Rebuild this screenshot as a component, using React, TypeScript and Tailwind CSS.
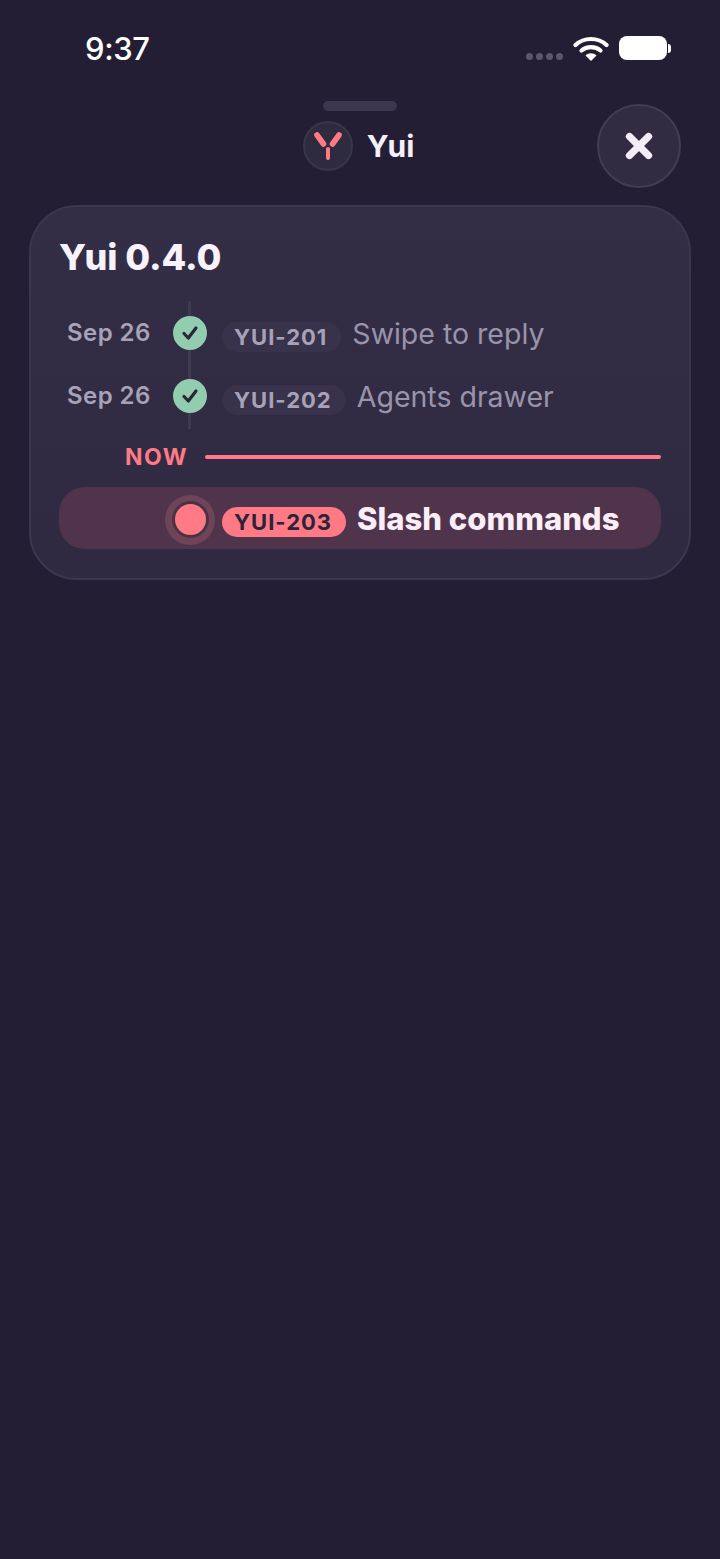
import { X } from 'lucide-react';

const FONT = "font-['Inter',sans-serif]";

const DONE = [
  { date: 'Sep 26', id: 'YUI-201', title: 'Swipe to reply' },
  { date: 'Sep 26', id: 'YUI-202', title: 'Agents drawer' },
];

function StatusBar() {
  return (
    <div className="flex h-[96px] items-center justify-between pl-[85px] pr-[49px]">
      <span className="text-[31px] font-medium leading-none tracking-[-0.4px] text-white">9:37</span>
      <div className="flex items-center">
        <div className="mt-[16px] flex gap-[3px]">
          <span className="h-[7px] w-[7px] rounded-full bg-[#5c5869]" />
          <span className="h-[7px] w-[7px] rounded-full bg-[#5c5869]" />
          <span className="h-[7px] w-[7px] rounded-full bg-[#5c5869]" />
          <span className="h-[7px] w-[7px] rounded-full bg-[#5c5869]" />
        </div>
        <svg className="ml-[10px]" width="36" height="26" viewBox="0 0 36 26" fill="none">
          <path d="M2.5 10C11 2 25 2 33.5 10" stroke="white" strokeWidth="4.2" strokeLinecap="round" />
          <path d="M8.5 15.5C13.5 11 22.5 11 27.5 15.5" stroke="white" strokeWidth="4.2" strokeLinecap="round" />
          <path d="M12.5 20.5C15.5 17.5 20.5 17.5 23.5 20.5L18 26Z" fill="white" />
        </svg>
        <div className="ml-[10px] h-[24px] w-[48px] rounded-[8px] bg-white" />
        <div className="ml-[1px] h-[9px] w-[3px] rounded-r-full bg-white" />
      </div>
    </div>
  );
}

function Header() {
  return (
    <div className="relative h-[109px]">
      <div className="absolute left-[323px] top-[5px] h-[10px] w-[74px] rounded-full bg-[#3c364f]" />
      <div className="flex h-[100px] items-center justify-center">
        <div className="flex items-center gap-[14px] pr-[3px]">
          <div className="flex h-[50px] w-[50px] items-center justify-center rounded-full border-2 border-[#3a354a] bg-[#2e2a3f]">
            <svg width="32" height="32" viewBox="0 0 32 32" fill="none">
              <path d="M5 5L11.5 14" stroke="#ff7a85" strokeWidth="5.6" strokeLinecap="round" />
              <path d="M27 5L20.5 14" stroke="#ff7a85" strokeWidth="5.6" strokeLinecap="round" />
              <path d="M16 19V28" stroke="#ff7a85" strokeWidth="4" strokeLinecap="round" />
            </svg>
          </div>
          <span className="text-[30px] font-bold leading-none text-[#f5effa]">Yui</span>
        </div>
      </div>
      <div className="absolute left-[597px] top-[8px] flex h-[84px] w-[84px] items-center justify-center rounded-full border-2 border-[#423d53] bg-[#312c42]">
        <X size={38} strokeWidth={4.6} className="text-[#f3edf9]" />
      </div>
    </div>
  );
}

function Check() {
  return (
    <div className="flex h-[34px] w-[34px] items-center justify-center rounded-full bg-[#93cdb0]">
      <svg width="22" height="22" viewBox="0 0 22 22" fill="none">
        <path d="M5 11.5L9.3 16L17 6" stroke="#2a2538" strokeWidth="3.2" strokeLinecap="round" strokeLinejoin="round" />
      </svg>
    </div>
  );
}

function DoneRow({ date, id, title }: { date: string; id: string; title: string }) {
  return (
    <div className="flex h-[63px] items-center">
      <span className="-mt-[2px] ml-[8px] w-[106px] text-[24px] font-semibold leading-none tracking-[0.45px] text-[#a8a2b8]">{date}</span>
      <div className="relative z-10 -mt-[2px]">
        <Check />
      </div>
      <span className="ml-[15px] mt-[6px] rounded-full bg-[#38324b] pl-[12px] pr-[14px] py-[2px] text-[22px] font-bold leading-[26px] tracking-[1px] text-[#a8a2b8]">{id}</span>
      <span className="ml-[11px] mt-[2px] text-[28.5px] leading-none text-[#9a94ab]">{title}</span>
    </div>
  );
}

export default function App() {
  return (
    <div className={`${FONT} h-[1559px] w-[720px] overflow-hidden bg-[#231e33]`}>
      <StatusBar />
      <Header />
      <div className="mx-[29px] rounded-[48px] border-2 border-[#3d374e] bg-linear-to-b from-[#332d46] to-[#2f2a41] px-[28px] pb-[29px] pt-[28px]">
        <h1 className="text-[36px] font-extrabold leading-[44px] tracking-[-0.1px] text-[#f7f2fb]">Yui 0.4.0</h1>
        <div className="relative mt-[22px]">
          <div className="absolute left-[129px] top-[0px] h-[128px] w-[3px] bg-[#3f3a50]" />
          <div className="pt-[1px]">
            {DONE.map((row) => (
              <DoneRow key={row.id} {...row} />
            ))}
          </div>
        </div>
        <div className="mt-[14px] flex h-[30px] items-center">
          <span className="ml-[66px] w-[80px] text-[23px] font-bold leading-none tracking-[1.5px] text-[#ff7a85]">NOW</span>
          <div className="h-[4px] flex-1 rounded-full bg-[#ff7a85]" />
        </div>
        <div className="mt-[15px] flex h-[62px] items-center rounded-[26px] bg-[#50344b]">
          <div className="ml-[106px] mt-[3px] flex h-[50px] w-[50px] items-center justify-center rounded-full bg-[#6f4459]">
            <div className="flex h-[37px] w-[37px] items-center justify-center rounded-full bg-[#483345]">
              <div className="h-[31px] w-[31px] rounded-full bg-[#ff7a85]" />
            </div>
          </div>
          <span className="ml-[7px] mt-[8px] rounded-full bg-[#ff7a85] pl-[12px] pr-[14px] py-[2px] text-[22px] font-bold leading-[26px] tracking-[1px] text-[#2b2338]">YUI-203</span>
          <span className="ml-[11px] text-[31px] font-extrabold leading-none text-[#fbeef8]">Slash commands</span>
        </div>
      </div>
    </div>
  );
}
